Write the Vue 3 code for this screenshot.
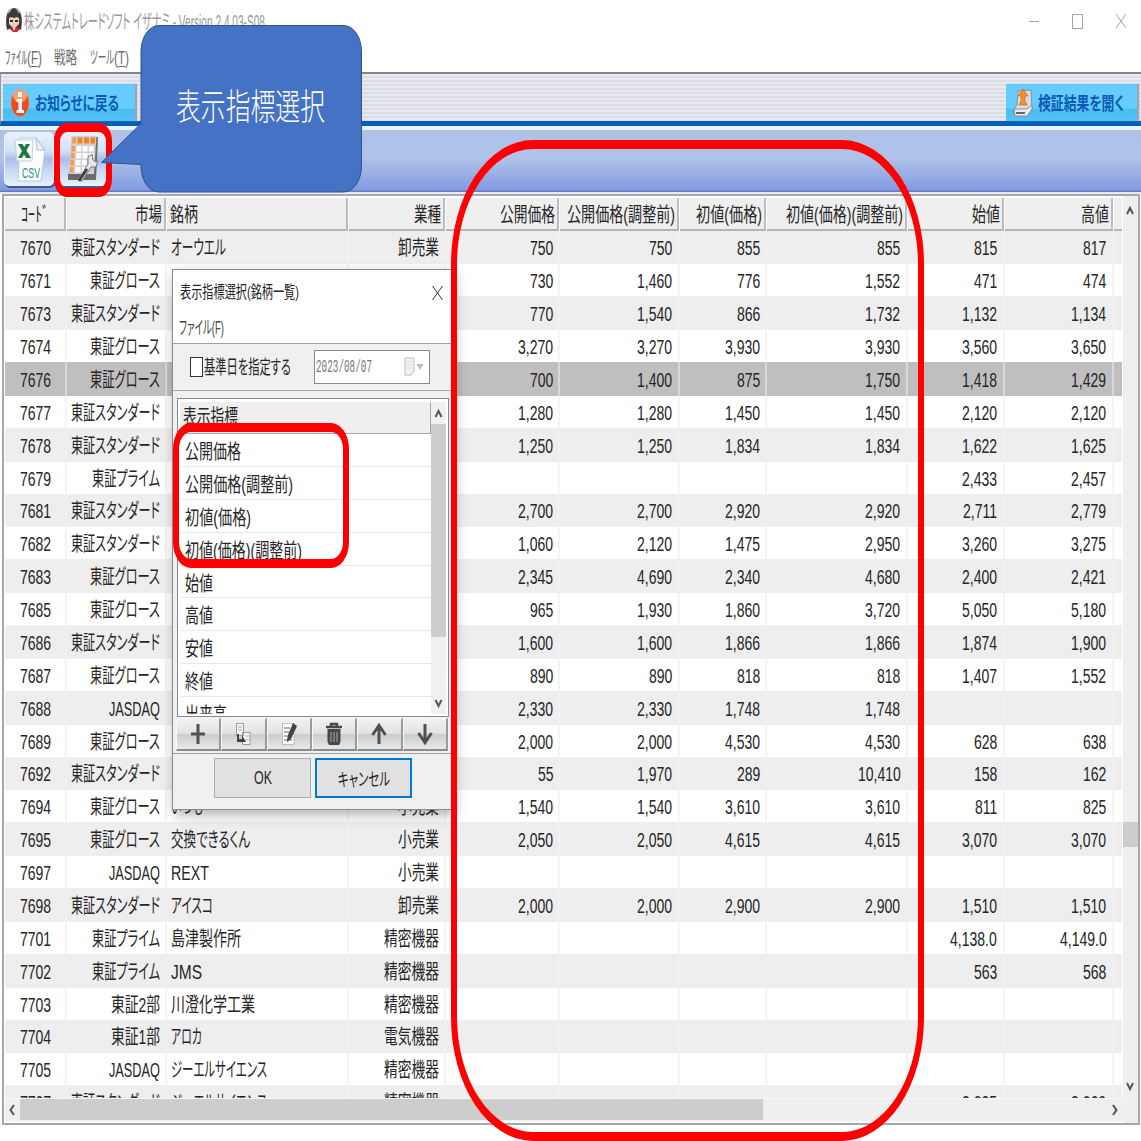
<template>
  <div class="app">
    <header class="titlebar">
      <svg class="app-icon" width="18" height="26" viewBox="0 0 18 26">
        <path d="M2 23C0 12 1 2 9 1C17 2 18 12 16 23L12 21H6Z" fill="#3d3b42" />
        <path d="M4 10Q9 5 14 10V17L9 22L4 17Z" fill="#f3cdb8" />
        <path d="M3 12Q5 5 9 7Q13 5 15 12L12 10L9 11L6 10Z" fill="#3d3b42" />
        <path d="M5 14h3M10 14h3" stroke="#333" stroke-width="2" />
        <path d="M4 21L8 21L9 24L11 20L15 22L12 25H8Z" fill="#cf2430" />
        <path d="M3 6L6 2M12 2L15 6" stroke="#aaa" stroke-width="2" />
      </svg>
      <FitText class="title" text="株システムトレードソフト イザナミ - Version 2.4.03-S08" :width="241" />
      <svg class="win-btns" width="100" height="20" viewBox="0 0 100 20">
        <path d="M3 11.5H13M46.5 4.5H56.5V18.5H46.5ZM90 4L100 18M100 4L90 18" fill="none" stroke="#a2a2a2" />
      </svg>
    </header>
    <nav class="menu">
      <span class="menu-item m1">
        <FitText :width="22" text="ﾌｧｲﾙ" />
        <FitText :width="4" text="(" /><FitText class="key" :width="7" text="F" /><FitText :width="4" text=")" />
      </span>
      <span class="menu-item m2"><FitText :width="23" text="戦略" /></span>
      <span class="menu-item m3">
        <FitText :width="24" text="ツール" />
        <FitText :width="4" text="(" /><FitText class="key" :width="7" text="T" /><FitText :width="4" text=")" />
      </span>
    </nav>

    <div class="tabs">
      <div class="tab">
        <svg width="20" height="30" viewBox="0 0 20 30">
          <ellipse cx="10" cy="15" rx="9" ry="13.5" fill="#ee4a22" stroke="#d98a70" />
          <ellipse cx="10" cy="8" rx="7" ry="6.500" fill="#ffb27d" opacity=".8" />
          <path d="M8 4h4v5H8ZM6.500 11H12V22H14V25H6.500V22H8.500V14H6.500Z" fill="#fff" />
        </svg>
        <FitText class="tab-text" text="お知らせに戻る" :width="84" />
      </div>
      <div class="tab right">
        <svg width="20" height="30" viewBox="0 0 20 30">
          <path d="M5 3L18 2L19 21L14 28H2L1 21L4 17Z" fill="#d9dbe0" stroke="#8a8f99" />
          <path d="M1 21H14L19 17V21L14 28H2Z" fill="#eceef2" stroke="#8a8f99" />
          <path d="M3 25H12" stroke="#666" stroke-width="2" />
          <path d="M10 1L15 8H12V13L14 17H6L8 13V8H5Z" fill="#f5921e" stroke="#ba6510" stroke-width=".6" />
        </svg>
        <FitText class="tab-text" text="検証結果を開く" :width="86" />
      </div>
    </div>

    <div class="toolbar">
      <div class="tool">
        <svg width="32" height="48" viewBox="0 0 32 48">
          <path d="M7 3H23L32 15L28 46H5Z" fill="#fbfdff" stroke="#b9c6dc" />
          <path d="M23 3L24 15H32Z" fill="#eef2f8" stroke="#aebbd2" />
          <path d="M2 5H20L19 26H4Z" fill="#f7fcf9" stroke="#c3d3d0" />
          <path d="M5 9H9.500L18 23H13Z" fill="#1b7a45" />
          <path d="M13 9H17L9 23H5Z" fill="#1b7a45" />
          <text x="9" y="43" textLength="18" lengthAdjust="spacingAndGlyphs" class="csv">CSV</text>
        </svg>
      </div>
      <div class="tool">
        <svg width="32" height="48" viewBox="0 0 32 48">
          <path d="M5 2H31L29 45H1V39L3 37Z" fill="#6b6b6b" />
          <path d="M4.500 1H29.500L27 39H2Z" fill="#d0d0d4" />
          <g fill="#fff">
            <path d="M9.500 11h4.500v5.500H9.500ZM15.500 11h5v5.500h-5ZM22 11h4.500v5.500H22Z" />
            <path d="M9 18h5v5.500H9ZM15.500 18h5v5.500h-5ZM22 18h4.500v5.500H22Z" />
            <path d="M8.500 25h5v5.500h-5ZM15 25h5v5.500h-5ZM21.500 25H26v5.500h-4.500Z" />
            <path d="M8 32h5.500v5.500H8ZM15 32h5v5.500h-5Z" />
          </g>
          <g fill="#f58220">
            <path d="M10.500 2.500h5v6h-5ZM17 2.500h5v6h-5ZM23.500 2.500H28v6h-4.500Z" />
            <path d="M5.500 2.500H9v6H5ZM4.500 11H8v5.500H4.500ZM4 18h3.500v5.500H4ZM3.500 25H7v5.500H3.500ZM3 32h3.500v5.500H3Z" fill="#f79a48" />
          </g>
          <path d="M21 22L25 19L26 25L29 27L31 26L29 32L24 32L15 46L11 45L21 29Z" fill="#e4e6e9" stroke="#77777b" />
          <path d="M20 34L12 46" stroke="#3c3c3c" stroke-width="2.500" />
        </svg>
      </div>
    </div>

    <div class="table-frame">
      <div class="table-main">
        <div class="grid head">
          <div v-for="(c, i) in columns" :key="i" class="cell" :class="c.cls">
            <FitText v-if="c.label" :text="c.label" :width="c.w" />
          </div>
          <div class="cell"></div>
        </div>
        <div class="rows">
          <div v-for="row in rows" :key="row[0]" class="grid row" :class="{ selected: row[0] === '7676' }">
            <div v-for="(v, i) in row" :key="i" class="cell" :class="columns[i].cls">
              <FitText v-if="v" :text="v" :width="textWidths[v]" />
            </div>
            <div class="cell"></div>
          </div>
        </div>
        <div class="hscroll">
          <svg width="15" height="22" viewBox="0 0 15 22"><path d="M9 6L5.500 11L9 16" class="arrow" /></svg>
          <div class="hthumb"></div>
          <svg class="to-end" width="15" height="22" viewBox="0 0 15 22"><path d="M5 6L8.500 11L5 16" class="arrow" /></svg>
        </div>
      </div>
      <div class="vscroll">
        <svg width="16" height="26" viewBox="0 0 16 26"><path d="M4 18L7 12L10 18" class="arrow" /></svg>
        <div class="vthumb"></div>
        <svg class="to-bottom" width="16" height="26" viewBox="0 0 16 26"><path d="M4 8L7 14L10 8" class="arrow" /></svg>
      </div>
    </div>

    <!-- 表示指標選択ダイアログ -->
    <section class="dialog">
      <div class="dlg-title">
        <FitText text="表示指標選択(銘柄一覧)" :width="119" />
        <svg width="11" height="16" viewBox="0 0 11 16"><path d="M.5 1L10.500 15M10.500 1L.5 15" stroke="#333" /></svg>
      </div>
      <div class="dlg-menu"><FitText text="ファイル(F)" :width="45" /></div>
      <div class="dlg-date">
        <span class="checkbox"></span>
        <FitText class="date-label" text="基準日を指定する" :width="87" />
        <div class="date-input">
          <FitText text="2023/08/07" :width="56" />
          <svg width="20" height="20" viewBox="0 0 20 20">
            <path d="M1 1H10V14L7 18H1Z" fill="#f3f3f3" stroke="#bbb" />
            <path d="M3 5H8M3 8H8M3 11H8" stroke="#ddd" />
            <path d="M12.500 7H19.500L16 13Z" fill="#bdbdbd" />
          </svg>
        </div>
      </div>
      <div class="dlg-body">
        <div class="list">
          <div class="list-main">
            <div class="list-head"><FitText text="表示指標" :width="55" /></div>
            <div v-for="item in indicators" :key="item.name" class="list-item">
              <FitText :text="item.name" :width="item.w" />
            </div>
          </div>
          <div class="list-scroll">
            <svg width="15" height="22" viewBox="0 0 15 22"><path d="M4.500 15L7.500 9L10.500 15" class="arrow" /></svg>
            <div class="list-thumb"></div>
            <svg class="to-bottom" width="15" height="22" viewBox="0 0 15 22"><path d="M4.500 8L7.500 14L10.500 8" class="arrow" /></svg>
          </div>
        </div>
        <div class="list-tools">
          <button><svg viewBox="0 0 16 24"><path d="M8 2V22M1 12H15" stroke="#505050" stroke-width="3" /></svg></button>
          <button>
            <svg viewBox="0 0 16 24">
              <path d="M1.500 1.500H8.500V13.500H1.500ZM7.500 10.500H15V22.500H7.500Z" fill="#f6f6f6" stroke="#9a9a9a" />
              <path d="M3 5H7M3 8H7M10 14H14M10 18H14" stroke="#aaa" />
              <path d="M2 12H4V17H7V13L11 20H2Z" fill="#444" />
            </svg>
          </button>
          <button>
            <svg viewBox="0 0 16 24">
              <path d="M1.500 1.500H13V22.500H1.500Z" fill="#fafafa" stroke="#aaa" stroke-dasharray="2 1" />
              <path d="M3 6H9M3 10H8M3 14H6M3 18H11" stroke="#999" stroke-width="1.500" />
              <path d="M12 1L16 4L10 17L6 20L6.500 14Z" fill="#444" />
            </svg>
          </button>
          <button>
            <svg viewBox="0 0 16 24">
              <path d="M0 5H16M5 5V2H11V5" fill="none" stroke="#484848" stroke-width="2.500" />
              <path d="M1.500 7H14.500V20L13 23H3L1.500 20Z" fill="#484848" />
              <path d="M5 10V20M8 10V20M11 10V20" stroke="#aaa" />
            </svg>
          </button>
          <button><svg viewBox="0 0 16 24"><path d="M8 22V3M1.500 13L8 3.500L14.500 13" fill="none" stroke="#505050" stroke-width="3" /></svg></button>
          <button><svg viewBox="0 0 16 24"><path d="M8 2V21M1.500 11L8 20.500L14.500 11" fill="none" stroke="#505050" stroke-width="3" /></svg></button>
        </div>
      </div>
      <div class="dlg-footer">
        <button class="btn"><FitText text="OK" :width="18" /></button>
        <button class="btn focus"><FitText text="キャンセル" :width="52" /></button>
      </div>
    </section>

    <div class="mark mark-columns"></div>
    <div class="mark mark-tool"></div>
    <div class="mark mark-list"></div>

    <div class="callout">
      <svg width="264" height="170" viewBox="0 0 264 170">
        <path
          d="M59 1.500H243A18 26 0 0 1 261.500 27.500V142A18 26 0 0 1 243 168H59A18 26 0 0 1 41 142V140.500L1.500 138.500L41 99.500V27.500A18 26 0 0 1 59 1.500Z"
          fill="#4472c4"
          stroke="#2f528f"
        />
      </svg>
      <FitText class="callout-text" text="表示指標選択" :width="149" />
    </div>
  </div>
</template>

<script setup>
import { h, ref, onMounted } from "vue";

// 横方向に縮めた文字。width 未指定なら 0.7 倍
const FitText = {
  props: { text: String, width: Number },
  setup(props) {
    const inner = ref(null);
    const scale = ref(0.7);
    const boxWidth = ref(props.width || 0);
    onMounted(() => {
      const natural = inner.value.getBoundingClientRect().width / scale.value;
      if (props.width) scale.value = props.width / natural;
      else boxWidth.value = natural * scale.value;
    });
    return () =>
      h("span", { class: "fit", style: { width: boxWidth.value + "px" } }, [
        h(
          "span",
          {
            ref: inner,
            class: "fit-inner",
            style: { transform: `scaleX(${scale.value})` },
          },
          props.text
        ),
      ]);
  },
};

const columns = [
  { label: "ｺｰﾄﾞ", w: 28, cls: "code" },
  { label: "市場", w: 27, cls: "market" },
  { label: "銘柄", w: 28, cls: "name" },
  { label: "業種", w: 27, cls: "sector" },
  { label: "公開価格", w: 55, cls: "num n1" },
  { label: "公開価格(調整前)", w: 108, cls: "num n2" },
  { label: "初値(価格)", w: 66, cls: "num n3" },
  { label: "初値(価格)(調整前)", w: 117, cls: "num n4" },
  { label: "始値", w: 28, cls: "num n5" },
  { label: "高値", w: 28, cls: "num n6" },
];

// 文字列ごとの表示幅
const textWidths = {
  東証スタンダード: 89,
  東証グロース: 70,
  東証プライム: 68,
  東証2部: 49,
  東証1部: 49,
  JASDAQ: 51,
  卸売業: 41,
  小売業: 41,
  精密機器: 55,
  電気機器: 55,
  オーウエル: 55,
  いつも: 32,
  交換できるくん: 79,
  REXT: 38,
  アイスコ: 42,
  島津製作所: 70,
  JMS: 31,
  川澄化学工業: 84,
  アロカ: 31,
  ジーエルサイエンス: 96,
};

const S = "東証スタンダード";
const G = "東証グロース";
const P = "東証プライム";

const rows = [
  ["7670", S, "オーウエル", "卸売業", "750", "750", "855", "855", "815", "817"],
  ["7671", G, "", "", "730", "1,460", "776", "1,552", "471", "474"],
  ["7673", S, "", "", "770", "1,540", "866", "1,732", "1,132", "1,134"],
  ["7674", G, "", "", "3,270", "3,270", "3,930", "3,930", "3,560", "3,650"],
  ["7676", G, "", "", "700", "1,400", "875", "1,750", "1,418", "1,429"],
  ["7677", S, "", "", "1,280", "1,280", "1,450", "1,450", "2,120", "2,120"],
  ["7678", S, "", "", "1,250", "1,250", "1,834", "1,834", "1,622", "1,625"],
  ["7679", P, "", "", "", "", "", "", "2,433", "2,457"],
  ["7681", S, "", "", "2,700", "2,700", "2,920", "2,920", "2,711", "2,779"],
  ["7682", S, "", "", "1,060", "2,120", "1,475", "2,950", "3,260", "3,275"],
  ["7683", G, "", "", "2,345", "4,690", "2,340", "4,680", "2,400", "2,421"],
  ["7685", G, "", "", "965", "1,930", "1,860", "3,720", "5,050", "5,180"],
  ["7686", S, "", "", "1,600", "1,600", "1,866", "1,866", "1,874", "1,900"],
  ["7687", G, "", "", "890", "890", "818", "818", "1,407", "1,552"],
  ["7688", "JASDAQ", "", "", "2,330", "2,330", "1,748", "1,748", "", ""],
  ["7689", G, "", "", "2,000", "2,000", "4,530", "4,530", "628", "638"],
  ["7692", S, "", "", "55", "1,970", "289", "10,410", "158", "162"],
  ["7694", G, "いつも", "小売業", "1,540", "1,540", "3,610", "3,610", "811", "825"],
  ["7695", G, "交換できるくん", "小売業", "2,050", "2,050", "4,615", "4,615", "3,070", "3,070"],
  ["7697", "JASDAQ", "REXT", "小売業", "", "", "", "", "", ""],
  ["7698", S, "アイスコ", "卸売業", "2,000", "2,000", "2,900", "2,900", "1,510", "1,510"],
  ["7701", P, "島津製作所", "精密機器", "", "", "", "", "4,138.0", "4,149.0"],
  ["7702", P, "JMS", "精密機器", "", "", "", "", "563", "568"],
  ["7703", "東証2部", "川澄化学工業", "精密機器", "", "", "", "", "", ""],
  ["7704", "東証1部", "アロカ", "電気機器", "", "", "", "", "", ""],
  ["7705", "JASDAQ", "ジーエルサイエンス", "精密機器", "", "", "", "", "", ""],
  ["7707", S, "ジーエルサイエンス", "精密機器", "", "", "", "", "3,025", "3,060"],
];

const indicators = [
  { name: "公開価格", w: 56 },
  { name: "公開価格(調整前)", w: 108 },
  { name: "初値(価格)", w: 66 },
  { name: "初値(価格)(調整前)", w: 117 },
  { name: "始値", w: 28 },
  { name: "高値", w: 28 },
  { name: "安値", w: 28 },
  { name: "終値", w: 28 },
  { name: "出来高", w: 42 },
];
</script>

<style>
body {
  margin: 0;
  background: #fff;
}

.fit {
  display: inline-block;
  flex: none;
  white-space: nowrap;
}

.fit-inner {
  display: inline-block;
  transform-origin: 0 50%;
  font-feature-settings: "palt";
}

.key .fit-inner {
  text-decoration: underline;
  text-underline-offset: 2px;
}
</style>

<style scoped>
.app {
  position: relative;
  width: 1141px;
  height: 1141px;
  overflow: hidden;
  box-sizing: border-box;
  background: #fff;
  color: #262626;
  font-family: "Liberation Sans", "Noto Sans CJK JP", sans-serif;
  font-size: 20px;
  line-height: 24px;
}

.app * {
  box-sizing: border-box;
}

svg {
  flex: none;
  display: block;
}

.arrow {
  fill: none;
  stroke: #555;
  stroke-width: 2;
}

.titlebar {
  display: flex;
  align-items: center;
  height: 40px;
  padding: 0 15px 0 5px;
}

.title {
  margin-left: 1px;
  margin-top: 3px;
  color: #999;
  font-size: 20px;
}

.win-btns {
  margin-left: auto;
}

.menu {
  display: flex;
  align-items: center;
  height: 32px;
  padding: 3px 5px 0;
  color: #6c6c6c;
  font-size: 18px;
}

.menu-item {
  display: flex;
}

.m1 {
  width: 49px;
}

.m2 {
  width: 36px;
}

.tabs {
  display: flex;
  align-items: flex-end;
  justify-content: space-between;
  height: 54px;
  padding: 0 4px 0 2px;
  border-top: 2px solid #858585;
  border-bottom: 5px solid #005fb8;
  border-left: 1px solid #999;
  background: repeating-linear-gradient(#e9e9f0 0 2px, #dddde8 2px 4px);
}

.tab {
  display: flex;
  align-items: center;
  width: 132px;
  height: 37px;
  padding-left: 7px;
  background: linear-gradient(#66ccff 0 66%, #4abcf2 67%, #52c4f4);
  box-shadow: 2px 0 1px #a2a2b0;
}

.tab.right {
  width: 131px;
}

.tab-text {
  margin-left: 5px;
  margin-top: 2px;
  color: #0b5bb5;
  font-size: 18px;
  font-weight: bold;
}

.toolbar {
  display: flex;
  align-items: flex-start;
  gap: 4px;
  height: 68px;
  padding: 2px 4px 0;
  border-top: 4px solid #edf1f8;
  border-bottom: 2px solid #e9e9ef;
  background: linear-gradient(#aec2e6 0%, #afc2e8 45%, #92a8e4 80%, #839be2 96%, #5b72be 100%);
}

.tool {
  display: flex;
  align-items: center;
  justify-content: center;
  width: 50px;
  height: 54px;
  border-radius: 5px;
  background: linear-gradient(#e8f1fd, #d3e1f8 35%, #a9bdea 50%, #c6d6f5 70%, #e5f0ff);
  border: 1px solid #eef4ff;
  box-shadow: 1px 2px 0 #3d5996;
}

.csv {
  fill: #159a70;
  font-size: 15px;
}

.table-frame {
  display: flex;
  width: 1138px;
  height: 931px;
  margin-left: 2px;
  border: 2px solid #a5a8b0;
  background: #fff;
}

.table-main {
  width: 1119px;
  padding-left: 1px;
}

.grid {
  display: grid;
  grid-template-columns: 61.5px 100.5px 182px 97px 113.5px 120px 87.5px 140.5px 97.5px 108.5px 8.5px;
  width: 1117px;
}

.head {
  height: 34.5px;
  padding-top: 2px;
}

.cell {
  display: flex;
  align-items: center;
  justify-content: flex-end;
  min-width: 0;
  padding-top: 2px;
}

.head .cell {
  background: #efefef;
  border-right: 2px solid #bdbdbd;
  border-bottom: 2px solid #b4b4b4;
  margin-right: 1px;
  padding-right: 2px;
  padding-top: 3px;
}

.head .cell:last-child {
  border-right: 0;
  margin-right: 0;
}

.head .code {
  padding-right: 15px;
}

.head .name {
  justify-content: flex-start;
  padding-left: 3px;
}

.rows {
  height: 867.5px;
  overflow: hidden;
}

.row {
  height: 32px;
}

.row .cell {
  border-right: 2px solid #f4f4f4;
}

.row:nth-child(odd) {
  height: 33.75px;
  background: #eeeeee;
}

.row:nth-child(odd) .cell {
  border-right-color: #f1f1f1;
}

.row .cell:last-child {
  border-right: 0;
}

.row.selected {
  background: #bfbfbf;
}

.row.selected .cell {
  border-right-color: #d9d9d9;
}

.row .code {
  justify-content: flex-start;
  padding-left: 15px;
}

.row .market {
  padding-right: 5px;
}

.row .name {
  justify-content: flex-start;
  padding-left: 4px;
}

.row .sector {
  padding-right: 5px;
}

.row .n1 {
  padding-right: 4px;
}

.row .n2,
.row .n3,
.row .n4,
.row .n6 {
  padding-right: 5px;
}

.row .n5 {
  padding-right: 6px;
}

.hscroll {
  display: flex;
  height: 23px;
  background: #efefef;
  border-top: 1px solid #f8f8f8;
}

.hthumb {
  width: 743px;
  height: 21px;
  background: #cdcdcd;
}

.to-end {
  margin-left: auto;
}

.vscroll {
  display: flex;
  flex-direction: column;
  width: 15px;
  background: #efefef;
}

.vthumb {
  height: 25px;
  margin-top: 600px;
  background: #cdcdcd;
}

.to-bottom {
  margin-top: auto;
}

.vscroll .to-bottom {
  margin-bottom: 22px;
}

.dialog {
  position: absolute;
  left: 172px;
  top: 269px;
  width: 281px;
  height: 541px;
  border: 1px solid #8a8a8a;
  background: #f0f0f0;
  box-shadow: 2px 5px 12px rgba(0, 0, 0, 0.3);
}

.dlg-title {
  display: flex;
  align-items: center;
  justify-content: space-between;
  height: 44px;
  padding: 2px 9px 0 7px;
  background: #fff;
  font-size: 17px;
}

.dlg-menu {
  height: 30px;
  padding: 2px 0 0 6px;
  border-bottom: 1px solid #a0a0a0;
  background: #fff;
  color: #444;
  font-size: 18px;
}

.dlg-date {
  display: flex;
  align-items: center;
  height: 47px;
  padding-left: 17px;
  border-bottom: 1px solid #a8a8a8;
}

.checkbox {
  width: 13px;
  height: 20px;
  border: 1px solid #333;
  background: #fff;
}

.date-label {
  margin-left: 1px;
  margin-top: 2px;
  font-size: 19px;
}

.date-input {
  display: flex;
  align-items: center;
  justify-content: space-between;
  width: 116px;
  height: 34px;
  margin-left: 23px;
  padding: 0 5px 0 1px;
  border: 1px solid #8b8b8b;
  background: #fff;
  color: #777;
  font-family: "Liberation Mono", monospace;
  font-size: 18px;
}

.dlg-body {
  height: 363px;
  padding: 7px 4px 0;
  border-bottom: 1px solid #a0a0a0;
}

.list {
  display: flex;
  width: 272px;
  height: 319px;
  padding: 3px 2px 2px;
  border: 1px solid #858b94;
  background: #fff;
}

.list-main {
  width: 251px;
  height: 312px;
  overflow: hidden;
}

.list-head {
  height: 32px;
  padding: 3px 0 0 3px;
  border-right: 1px solid #a8a8a8;
  border-bottom: 1px solid #a8a8a8;
  background: #efefef;
}

.list-item {
  height: 32.9px;
  padding: 6px 0 0 5px;
  border-bottom: 1px solid #e8e8e8;
}

.list-scroll {
  display: flex;
  flex-direction: column;
  width: 15px;
  background: #f0f0f0;
}

.list-thumb {
  height: 213px;
  background: #cdcdcd;
}

.list-tools {
  display: flex;
  width: 272px;
  height: 33px;
  margin-top: 1px;
  margin-left: -1px;
}

.list-tools button {
  display: flex;
  align-items: center;
  justify-content: center;
  flex: 1;
  padding: 0;
  border: 1px solid #f8f8f8;
  border-right: 2px solid #9a9a9a;
  border-bottom: 2px solid #8a8a8a;
  background: linear-gradient(#f1f1f1, #e2e2e2 48%, #cccccc 52%, #e8e8e8);
}

.list-tools svg {
  width: 16px;
  height: 24px;
}

.dlg-footer {
  display: flex;
  gap: 4px;
  padding: 4px 0 0 41px;
}

.btn {
  display: flex;
  align-items: center;
  justify-content: center;
  width: 97px;
  height: 40px;
  padding: 0;
  border: 1px solid #adadad;
  background: #e1e1e1;
  color: #262626;
  font-family: inherit;
  font-size: 18px;
}

.btn.focus {
  border: 2px solid #0078d7;
}

.mark {
  position: absolute;
  border: solid #ff0000;
}

.mark-columns {
  left: 451px;
  top: 140px;
  width: 473px;
  height: 1001px;
  border-width: 9px 6px;
  border-radius: 82px / 124px;
}

.mark-tool {
  left: 54px;
  top: 123px;
  width: 58px;
  height: 74px;
  border-width: 9px 6px;
  border-radius: 13px / 18px;
}

.mark-list {
  left: 173px;
  top: 423px;
  width: 176px;
  height: 145px;
  border-width: 9px 6px;
  border-radius: 18px / 26px;
}

.callout {
  position: absolute;
  left: 100px;
  top: 24px;
  width: 264px;
  height: 170px;
}

.callout-text {
  position: absolute;
  left: 76px;
  top: 56px;
  color: #fff;
  font-family: "Noto Sans CJK JP", sans-serif;
  font-size: 36px;
  font-weight: 300;
  line-height: 48px;
}
</style>
